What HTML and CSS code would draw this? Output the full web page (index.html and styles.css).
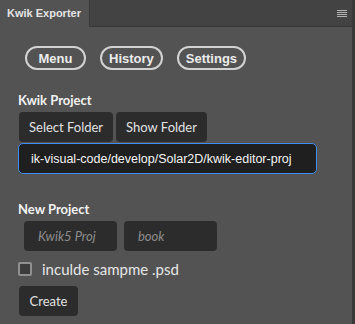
FILE: index.html
```html
<!DOCTYPE html>
<html>
<head>
<meta charset="utf-8">
<!--CSS-->
<link rel="stylesheet" href="styles.css">
</head>
<body>

<div class="panel">

<!--Tab Bar-->
<div class="tabBar">
  <div class="tab">Kwik Exporter</div>
  <div class="tabFill">
    <svg class="panelMenu" width="10" height="8" viewBox="0 0 10 8">
      <rect x="0" y="0" width="10" height="1" fill="#b4b4b4"/>
      <rect x="0" y="2" width="10" height="1" fill="#b4b4b4"/>
      <rect x="0" y="4" width="10" height="1" fill="#b4b4b4"/>
      <rect x="0" y="6" width="10" height="1" fill="#b4b4b4"/>
    </svg>
  </div>
</div>

<!--Nav-->
<div class="nav">
  <button class="pill">Menu</button>
  <button class="pill">History</button>
  <button class="pill">Settings</button>
</div>

<div class="content">

<!--Kwik Project-->
<div class="sectionLabel first">Kwik Project</div>
<div class="buttonRow">
  <button class="darkButton">Select Folder</button>
  <button class="darkButton">Show Folder</button>
</div>
<input class="pathField" type="text" value="ik-visual-code/develop/Solar2D/kwik-editor-proj">

<!--New Project-->
<div class="sectionLabel second">New Project</div>
<div class="fieldRow">
  <input class="smallField" type="text" placeholder="Kwik5 Proj">
  <input class="smallField" type="text" placeholder="book">
</div>

<label class="checkRow">
  <input class="checkBox" type="checkbox">
  <span>inculde sampme .psd</span>
</label>

<button class="darkButton createButton">Create</button>

</div>
</div>

<div class="edge"></div>

</body>
</html>
```

FILE: styles.css
```css
body {
  margin: 0;
  height: 324px;
  display: flex;
  background-color: #535353;
  overflow: hidden;
}

.panel {
  flex: 1;
}

.edge {
  width: 3px;
  background-color: #383838;
}

/* Tab bar */
.tabBar {
  display: flex;
  height: 27px;
}

.tab {
  width: 82px;
  padding-left: 7px;
  line-height: 26px;
  font-family: "Liberation Sans", Arial, sans-serif;
  font-weight: bold;
  font-size: 11px;
  color: #e4e4e4;
  background-color: #535353;
}

.tabFill {
  flex: 1;
  display: flex;
  justify-content: flex-end;
  align-items: flex-start;
  background-color: #434343;
  border-left: 1px solid #383838;
  border-bottom: 1px solid #383838;
}

.panelMenu {
  margin-top: 10px;
  margin-right: 5px;
}

/* Nav pills */
.nav {
  display: flex;
  gap: 14px;
  margin-top: 19px;
  padding-left: 25px;
}

.pill {
  box-sizing: border-box;
  min-width: 61px;
  height: 24px;
  padding: 0 7px;
  border: 2px solid #d2d2d2;
  border-radius: 12px;
  background: transparent;
  font-family: "Liberation Sans", Arial, sans-serif;
  font-weight: bold;
  font-size: 13px;
  color: #ececec;
  text-align: center;
}

/* Content */
.content {
  padding-left: 18px;
}

.sectionLabel {
  line-height: 16px;
  font-family: Lato, "Open Sans", sans-serif;
  font-weight: bold;
  font-size: 13px;
  color: #f2f2f2;
}

.sectionLabel.first {
  margin-top: 22px;
}

.sectionLabel.second {
  margin-top: 27px;
}

.buttonRow {
  display: flex;
  gap: 3px;
  margin-top: 4px;
  margin-left: 1px;
}

.darkButton {
  height: 30px;
  padding: 0 10px;
  border: none;
  border-radius: 4px;
  background-color: #2c2c2c;
  font-family: Lato, "Open Sans", sans-serif;
  font-size: 13px;
  color: #e2e2e2;
}

.pathField {
  display: block;
  box-sizing: border-box;
  width: 299px;
  height: 31px;
  margin: 1px 0 0 0;
  padding: 0 0 0 12px;
  border: 1px solid #3d8ef0;
  border-radius: 5px;
  background-color: #1f1f1f;
  font-family: "Liberation Sans", Arial, sans-serif;
  font-size: 12.5px;
  color: #f4f4f4;
  outline: none;
}

.fieldRow {
  display: flex;
  gap: 7px;
  margin-top: 4px;
  margin-left: 6px;
}

.smallField {
  box-sizing: border-box;
  width: 93px;
  height: 30px;
  margin: 0;
  padding: 0 0 0 14px;
  border: none;
  border-radius: 4px;
  background-color: #2c2c2c;
  font-family: Lato, "Open Sans", sans-serif;
  font-size: 13px;
  color: #e2e2e2;
  outline: none;
}

.smallField::placeholder {
  font-style: italic;
  color: #8c8c8c;
}

.checkRow {
  display: flex;
  align-items: center;
  height: 14px;
  margin-top: 11px;
  line-height: 14px;
  font-family: Lato, "Open Sans", sans-serif;
  font-size: 15px;
  color: #e6e6e6;
}

.checkBox {
  -webkit-appearance: none;
  appearance: none;
  box-sizing: border-box;
  width: 14px;
  height: 14px;
  margin: 0 10px 0 0;
  border: 2px solid #909090;
  border-radius: 2px;
  background-color: #3c3c3c;
}

.createButton {
  display: block;
  margin-top: 10px;
  margin-left: 1px;
  width: 59px;
  padding: 0;
}
```
